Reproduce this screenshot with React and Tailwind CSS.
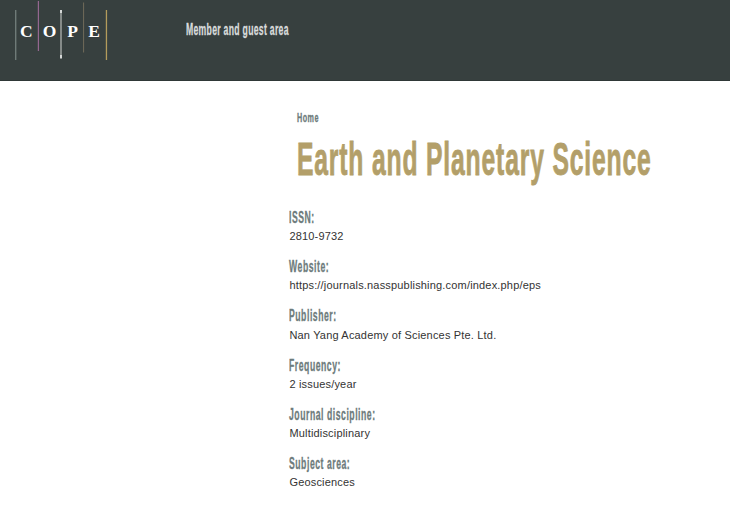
const details = [
  { label: "ISSN:", value: "2810-9732" },
  {
    label: "Website:",
    value: "https://journals.nasspublishing.com/index.php/eps",
  },
  { label: "Publisher:", value: "Nan Yang Academy of Sciences Pte. Ltd." },
  { label: "Frequency:", value: "2 issues/year" },
  { label: "Journal discipline:", value: "Multidisciplinary" },
  { label: "Subject area:", value: "Geosciences" },
];

// Condensed display lettering used for headings and labels
const Condensed = ({ as: Tag = "span", className, children }) => (
  <Tag
    className={`block w-max origin-left whitespace-nowrap font-bold font-['Liberation_Sans',sans-serif] ${className}`}
  >
    {children}
  </Tag>
);

const Logo = () => (
  <svg width="120" height="64" viewBox="0 0 120 64" aria-label="COPE">
    <rect x="15" y="10" width="1.4" height="50" fill="#6f7b78" />
    <rect x="37.8" y="1" width="1.2" height="50" fill="#946790" />
    <rect x="60" y="10" width="2" height="48" fill="#858b89" />
    <rect x="60" y="10" width="2" height="3" fill="#d5d8d7" />
    <rect x="60" y="55" width="2" height="3.5" fill="#d5d8d7" />
    <rect x="83" y="2.5" width="1.1" height="50" fill="#6b6757" />
    <rect x="105.8" y="10" width="1.3" height="50" fill="#b39c5c" />
    <g
      fill="#fff"
      fontFamily="'Liberation Serif', serif"
      fontWeight="700"
      fontSize="17.5"
    >
      <text x="20" y="36.8">C</text>
      <text x="42.8" y="36.8">O</text>
      <text x="67.2" y="36.8">P</text>
      <text x="88.2" y="36.8">E</text>
    </g>
  </svg>
);

const App = () => {
  return (
    <div className="h-[510px] w-[730px] overflow-hidden bg-white font-['Liberation_Sans',Arial,sans-serif]">
      <header className="flex h-[81px] bg-[#37403f] border-b border-[#2f3837]">
        <Logo />
        <Condensed
          as="a"
          className="ml-[66px] mt-[20px] h-5 text-[16px] leading-5 tracking-[0.55px] text-[#d9dcdc] scale-x-[0.54] [-webkit-text-stroke:0.3px_#d9dcdc]"
        >
          Member and guest area
        </Condensed>
      </header>

      <main className="pl-[289px]">
        <div className="pl-2 pt-[29px]">
          <Condensed
            as="a"
            className="text-[12px] leading-4 tracking-[0.8px] text-[#6d7b7b] scale-x-[0.6] [-webkit-text-stroke:0.3px_#6d7b7b]"
          >
            Home
          </Condensed>
          <Condensed
            as="h1"
            className="mt-2 text-[47px] leading-[50px] tracking-[1.6px] text-[#b39f69] scale-x-[0.525] [-webkit-text-stroke:0.9px_#b39f69]"
          >
            Earth and Planetary Science
          </Condensed>
        </div>

        <dl className="mt-[24px]">
          {details.map(({ label, value }) => (
            <div key={label} className="h-[49.2px]">
              <dt className="h-[20.3px]">
                <Condensed className="text-[16px] leading-5 tracking-[1px] text-[#6d7b7b] scale-x-[0.54] [-webkit-text-stroke:0.3px_#6d7b7b]">
                  {label}
                </Condensed>
              </dt>
              <dd className="pl-[0.4px] text-[11px] leading-4 tracking-[0.18px] text-[#333]">
                {value}
              </dd>
            </div>
          ))}
        </dl>
      </main>
    </div>
  );
};

export default App;
